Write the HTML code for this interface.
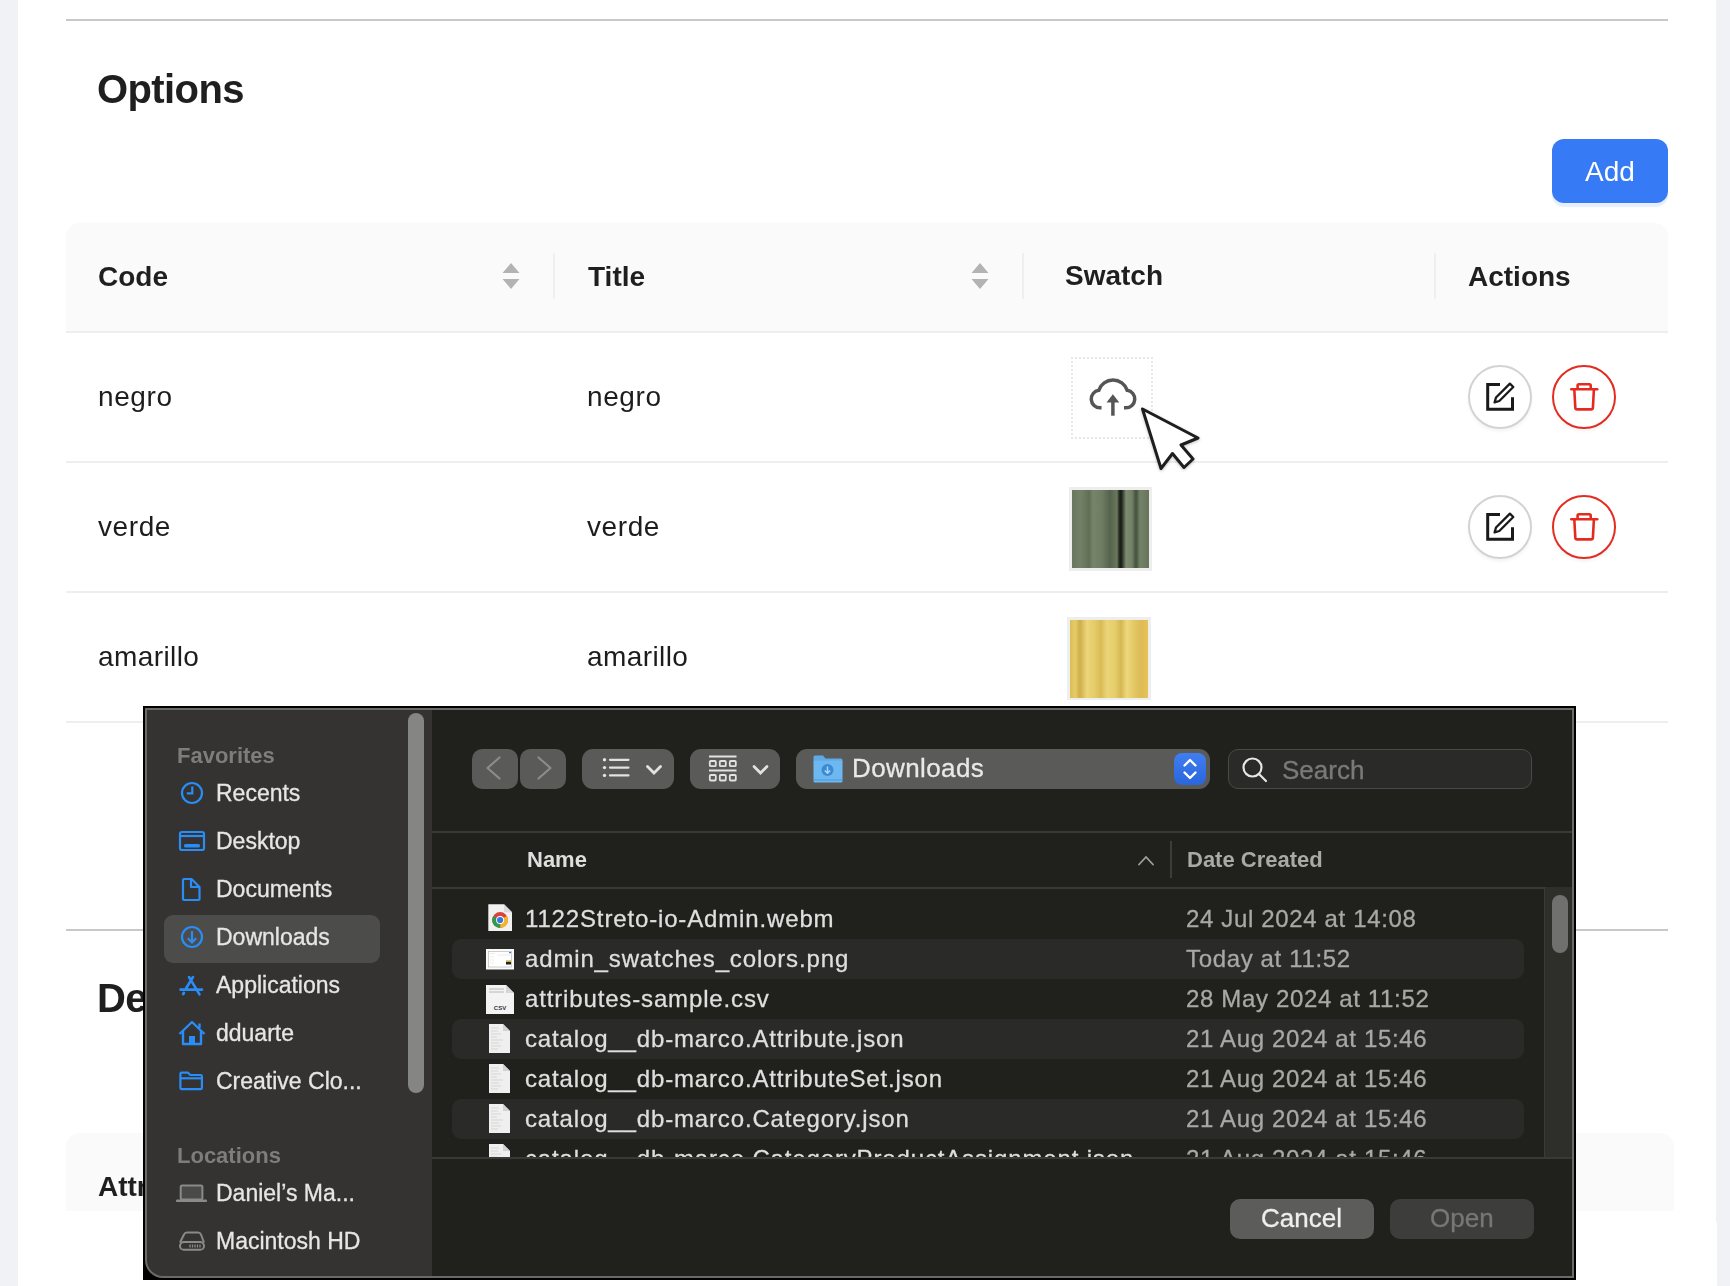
<!DOCTYPE html>
<html><head><meta charset="utf-8">
<style>
*{margin:0;padding:0;box-sizing:border-box}
html,body{width:1730px;height:1286px;overflow:hidden;background:#fff}
body{position:relative;font-family:"Liberation Sans",sans-serif;color:#1d1d1f}
.a{position:absolute}
.t{position:absolute;line-height:1;white-space:nowrap;will-change:transform}
.b{font-weight:bold}
.d{-webkit-text-stroke:0.3px currentColor}
</style></head><body>
<!-- page side strips -->
<div class="a" style="left:0;top:0;width:18px;height:1286px;background:#f0f2f6"></div>
<div class="a" style="left:1716px;top:0;width:14px;height:1222px;background:#f0f2f6"></div><div class="a" style="left:1717px;top:1222px;width:13px;height:64px;background:#f0f2f6"></div>
<!-- top line -->
<div class="a" style="left:66px;top:19px;width:1602px;height:2px;background:#c8c8c8"></div>
<div class="t b" style="left:97px;top:69px;font-size:40px;letter-spacing:-0.6px;color:#1f1f1f">Options</div>
<!-- Add button -->
<div class="a" style="left:1552px;top:139px;width:116px;height:64px;border-radius:12px;background:#367af6;box-shadow:0 4px 1px #e7effc"></div>
<div class="t" style="left:1585px;top:158px;font-size:28px;color:#fff">Add</div>
<!-- table header -->
<div class="a" style="left:66px;top:223px;width:1602px;height:109px;background:#fafafa;border-radius:14px 14px 0 0"></div>
<div class="t b" style="left:98px;top:263px;font-size:28px;color:#1f1f1f">Code</div>
<div class="t b" style="left:588px;top:263px;font-size:28px;color:#1f1f1f">Title</div>
<div class="t b" style="left:1065px;top:262px;font-size:28px;color:#1f1f1f">Swatch</div>
<div class="t b" style="left:1468px;top:263px;font-size:28px;color:#1f1f1f">Actions</div>
<div class="a" style="left:553px;top:253px;width:2px;height:46px;background:#efefef"></div>
<div class="a" style="left:1022px;top:253px;width:2px;height:46px;background:#efefef"></div>
<div class="a" style="left:1434px;top:253px;width:2px;height:46px;background:#efefef"></div>
<svg class="a" style="left:500px;top:261px" width="22" height="30"><path d="M2.5 12 L11 2 L19.5 12 Z M2.5 18 L11 28 L19.5 18 Z" fill="#b3b3b3"/></svg>
<svg class="a" style="left:969px;top:261px" width="22" height="30"><path d="M2.5 12 L11 2 L19.5 12 Z M2.5 18 L11 28 L19.5 18 Z" fill="#b3b3b3"/></svg>
<!-- row lines -->
<div class="a" style="left:66px;top:331px;width:1602px;height:2px;background:#eeeeee"></div>
<div class="a" style="left:66px;top:461px;width:1602px;height:2px;background:#eeeeee"></div>
<div class="a" style="left:66px;top:591px;width:1602px;height:2px;background:#eeeeee"></div>
<div class="a" style="left:66px;top:721px;width:1602px;height:2px;background:#eeeeee"></div>
<!-- rows -->
<div class="t" style="left:98px;top:383px;font-size:28px;letter-spacing:0.6px">negro</div>
<div class="t" style="left:587px;top:383px;font-size:28px;letter-spacing:0.6px">negro</div>
<div class="t" style="left:98px;top:513px;font-size:28px;letter-spacing:0.6px">verde</div>
<div class="t" style="left:587px;top:513px;font-size:28px;letter-spacing:0.6px">verde</div>
<div class="t" style="left:98px;top:643px;font-size:28px;letter-spacing:0.4px">amarillo</div>
<div class="t" style="left:587px;top:643px;font-size:28px;letter-spacing:0.4px">amarillo</div>
<!-- swatches -->
<div class="a" style="left:1071px;top:357px;width:82px;height:82px;border:2px dotted #e6e6e6"></div>
<svg class="a" style="left:1085px;top:372px" width="56" height="48" viewBox="0 0 56 48">
<path d="M16.5 35.75 H15 A8.75 8.75 0 0 1 13.74 18.34 A15 15 0 0 1 42.26 18.34 A8.75 8.75 0 0 1 41 35.75 H39" fill="none" stroke="#555" stroke-width="3.5"/>
<path d="M27.9 43.7 V29" stroke="#555" stroke-width="3.5" fill="none"/>
<path d="M21.5 30.6 L27.9 22.3 L34.3 30.6 Z" fill="#555"/>
</svg>
<div class="a" style="left:1069px;top:487px;width:83px;height:84px;background:#eee"></div>
<div class="a" style="left:1072px;top:490px;width:77px;height:78px;background:linear-gradient(90deg,#687760 0,#728166 9px,#606e55 17px,#768569 21px,#6e7c63 30px,#55634c 38px,#6a785e 45px,#2a3024 47px,#161a13 49px,#3a4433 51px,#7d8b70 54px,#718066 60px,#44503b 64px,#748268 68px,#66745b 77px)"></div>
<div class="a" style="left:1067px;top:617px;width:84px;height:83px;background:#eee"></div>
<div class="a" style="left:1070px;top:620px;width:78px;height:78px;background:linear-gradient(90deg,#d9bd58 0,#e6cc68 5px,#cfae4a 10px,#ecd67a 17px,#e4ca68 25px,#d8bb55 31px,#ebd478 37px,#e6cd6c 45px,#d6b752 51px,#eed87d 57px,#e3c865 64px,#dcbc55 71px,#e8c256 78px)"></div>
<!-- actions -->
<div class="a" style="left:1468px;top:365px;width:64px;height:64px;border-radius:50%;border:2.5px solid #d3d3d3;background:#fff;box-shadow:0 3px 3px rgba(0,0,0,0.04)"></div>
<div class="a" style="left:1552px;top:365px;width:64px;height:64px;border-radius:50%;border:2.5px solid #e32b1f;background:#fff;box-shadow:0 3px 3px rgba(0,0,0,0.04)"></div>
<div class="a" style="left:1468px;top:495px;width:64px;height:64px;border-radius:50%;border:2.5px solid #d3d3d3;background:#fff;box-shadow:0 3px 3px rgba(0,0,0,0.04)"></div>
<div class="a" style="left:1552px;top:495px;width:64px;height:64px;border-radius:50%;border:2.5px solid #e32b1f;background:#fff;box-shadow:0 3px 3px rgba(0,0,0,0.04)"></div>
<svg class="a" style="left:1484px;top:381px" width="32" height="32" viewBox="0 0 32 32">
<path d="M16 3.5 H3.7 V28.2 H28.5 V16.3" fill="none" stroke="#1a1a1a" stroke-width="3"/>
<path d="M25.9 2.6 L29.3 6 L15.3 20 L10.6 21.4 L12 16.5 Z" fill="none" stroke="#1a1a1a" stroke-width="2.3" stroke-linejoin="round"/>
</svg>
<svg class="a" style="left:1484px;top:511px" width="32" height="32" viewBox="0 0 32 32">
<path d="M16 3.5 H3.7 V28.2 H28.5 V16.3" fill="none" stroke="#1a1a1a" stroke-width="3"/>
<path d="M25.9 2.6 L29.3 6 L15.3 20 L10.6 21.4 L12 16.5 Z" fill="none" stroke="#1a1a1a" stroke-width="2.3" stroke-linejoin="round"/>
</svg>
<svg class="a" style="left:1568px;top:381px" width="32" height="32" viewBox="0 0 32 32">
<path d="M3.3 8.2 H29.2" stroke="#e32b1f" stroke-width="2.6" stroke-linecap="round"/>
<path d="M9.6 8 V4.6 Q9.6 3.3 10.9 3.3 H21.4 Q22.7 3.3 22.7 4.6 V8" fill="none" stroke="#e32b1f" stroke-width="2.6"/>
<path d="M6.3 8.2 L7.3 26.6 Q7.4 28.4 9.2 28.4 H23 Q24.8 28.4 24.9 26.6 L25.9 8.2" fill="none" stroke="#e32b1f" stroke-width="2.6" stroke-linejoin="round"/>
</svg>
<svg class="a" style="left:1568px;top:511px" width="32" height="32" viewBox="0 0 32 32">
<path d="M3.3 8.2 H29.2" stroke="#e32b1f" stroke-width="2.6" stroke-linecap="round"/>
<path d="M9.6 8 V4.6 Q9.6 3.3 10.9 3.3 H21.4 Q22.7 3.3 22.7 4.6 V8" fill="none" stroke="#e32b1f" stroke-width="2.6"/>
<path d="M6.3 8.2 L7.3 26.6 Q7.4 28.4 9.2 28.4 H23 Q24.8 28.4 24.9 26.6 L25.9 8.2" fill="none" stroke="#e32b1f" stroke-width="2.6" stroke-linejoin="round"/>
</svg>
<!-- cursor -->
<svg class="a" style="left:1136px;top:402px;filter:drop-shadow(0 1.5px 1.5px rgba(0,0,0,0.25))" width="70" height="74" viewBox="0 0 70 74">
<path d="M6.5 7 L62 36 L45 43 L57 57 L48 65.5 L36.5 51.5 L25 66.5 Z" fill="#fff" stroke="#1e1e1e" stroke-width="3" stroke-linejoin="round"/>
</svg>
<!-- lower page -->
<div class="a" style="left:66px;top:929px;width:1602px;height:2px;background:#c8c8c8"></div>
<div class="t b" style="left:97px;top:977.5px;font-size:40px;letter-spacing:-0.6px;color:#1f1f1f">Default values</div>
<div class="a" style="left:66px;top:1133px;width:1608px;height:78px;background:#fafafa;border-radius:14px 14px 0 0"></div>
<div class="t b" style="left:98px;top:1173px;font-size:28px;color:#1f1f1f">Attribute</div>
<!-- ============ DIALOG ============ -->
<div class="a" style="left:143px;top:706px;width:1433px;height:574px;background:#000"></div>
<div class="a" id="dlg" style="left:145px;top:708px;width:1429px;height:570px;background:#6a6a68;border-radius:0 0 0 18px;overflow:hidden">
 <div class="a" style="left:2px;top:2px;width:285px;height:566px;background:#343332;border-radius:0 0 0 16px"></div>
 <div class="a" style="left:287px;top:2px;width:1140px;height:566px;background:#20201d"></div>
</div>
<!-- sidebar -->
<div class="a" style="left:408px;top:713px;width:16px;height:380px;border-radius:8px;background:#858584"></div>
<div class="a" style="left:164px;top:915px;width:216px;height:48px;border-radius:9px;background:#4c4c4b"></div>
<div class="t b" style="left:176.5px;top:745px;font-size:22px;color:#7d7d7c">Favorites</div>
<div class="t d" style="left:215.5px;top:781.5px;font-size:23px;color:#e6e6e5">Recents</div>
<div class="t d" style="left:215.5px;top:829.5px;font-size:23px;color:#e6e6e5">Desktop</div>
<div class="t d" style="left:215.5px;top:877.5px;font-size:23px;color:#e6e6e5">Documents</div>
<div class="t d" style="left:215.5px;top:925.5px;font-size:23px;color:#e6e6e5">Downloads</div>
<div class="t d" style="left:215.5px;top:973.5px;font-size:23px;color:#e6e6e5">Applications</div>
<div class="t d" style="left:215.5px;top:1021.5px;font-size:23px;color:#e6e6e5">dduarte</div>
<div class="t d" style="left:215.5px;top:1069.5px;font-size:23px;color:#e6e6e5">Creative Clo...</div>
<div class="t b" style="left:176.5px;top:1145px;font-size:22px;color:#7d7d7c">Locations</div>
<div class="t d" style="left:215.5px;top:1181.5px;font-size:23px;color:#e6e6e5">Daniel&#8217;s Ma...</div>
<div class="t d" style="left:215.5px;top:1229.5px;font-size:23px;color:#e6e6e5">Macintosh HD</div>
<!-- sidebar icons -->
<svg class="a" style="left:176px;top:776px" width="34" height="34" viewBox="0 0 34 34" fill="none" stroke="#2a8cf6" stroke-width="2.2">
 <circle cx="16" cy="17" r="10"/><path d="M16.3 10.5 V17.3 H10.8"/>
</svg>
<svg class="a" style="left:176px;top:824px" width="34" height="34" viewBox="0 0 34 34" fill="none" stroke="#2a8cf6" stroke-width="2.2">
 <rect x="4" y="8" width="24" height="18" rx="2"/><path d="M4 12 H28"/><rect x="8" y="20" width="16" height="3.6" rx="1.5" fill="#2a8cf6" stroke="none"/>
</svg>
<svg class="a" style="left:176px;top:872px" width="34" height="34" viewBox="0 0 34 34" fill="none" stroke="#2a8cf6" stroke-width="2.2" stroke-linejoin="round">
 <path d="M7 8 Q7 7 8 7 H15.5 L23.5 15 V27 Q23.5 28 22.5 28 H8 Q7 28 7 27 Z"/><path d="M15 7 V15 H23.5"/>
</svg>
<svg class="a" style="left:176px;top:920px" width="34" height="34" viewBox="0 0 34 34" fill="none" stroke="#2a8cf6" stroke-width="2.2">
 <circle cx="16" cy="17" r="10"/><path d="M16 11 V22.5 M11.8 18.3 L16 22.5 L20.2 18.3"/>
</svg>
<svg class="a" style="left:176px;top:968px" width="34" height="34" viewBox="0 0 34 34" fill="none" stroke="#2a8cf6" stroke-width="2.6" stroke-linecap="round">
 <path d="M13 9 L23.5 26.3 M17 9 L10 20.5 M4.5 21.6 H26"/><path d="M7.2 26 L7.8 25" stroke-width="2.8"/>
</svg>
<svg class="a" style="left:176px;top:1016px" width="34" height="34" viewBox="0 0 34 34" fill="none" stroke="#2a8cf6" stroke-width="2.4" stroke-linejoin="round">
 <path d="M3.5 18 L16 6 L28.5 18"/><path d="M7 15 V28 H25 V15"/><path d="M23.5 12 V7.5"/><rect x="13" y="20" width="6" height="8" fill="#2a8cf6" stroke="none"/>
</svg>
<svg class="a" style="left:176px;top:1064px" width="34" height="34" viewBox="0 0 34 34" fill="none" stroke="#2a8cf6" stroke-width="2.2" stroke-linejoin="round">
 <path d="M4.4 10 Q4.4 8.7 5.7 8.7 H12 L14.3 11 H24.6 Q25.9 11 25.9 12.3 V23.9 Q25.9 25.2 24.6 25.2 H5.7 Q4.4 25.2 4.4 23.9 Z"/><path d="M4.4 14.3 H25.9"/>
</svg>
<svg class="a" style="left:174px;top:1178px" width="38" height="30" viewBox="0 0 38 30">
 <rect x="6.7" y="7.6" width="21.7" height="14" rx="1.5" fill="#4a4a49" stroke="#8a8a89" stroke-width="2"/><rect x="2" y="21.4" width="31" height="2.7" rx="1.2" fill="#8a8a89"/>
</svg>
<svg class="a" style="left:176px;top:1226px" width="34" height="30" viewBox="0 0 34 30" fill="none" stroke="#8a8a89" stroke-width="2">
 <path d="M4 16.5 L8 8.5 Q8.8 6.5 11 6.5 H22 Q24.2 6.5 25 8.5 L28 16.5"/><rect x="4" y="16" width="24" height="7.8" rx="3.9"/><path d="M14 18.5 V21.5 M16.5 18.5 V21.5 M19 18.5 V21.5 M21.5 18.5 V21.5 M24 18.5 V21.5" stroke-width="1.3"/>
</svg>
<!-- toolbar -->
<div class="a" style="left:472px;top:749px;width:46px;height:40px;border-radius:10px;background:#5a5a59"></div>
<div class="a" style="left:520px;top:749px;width:46px;height:40px;border-radius:10px;background:#5a5a59"></div>
<svg class="a" style="left:472px;top:749px" width="94" height="40" viewBox="0 0 94 40" fill="none" stroke="#8c8c8b" stroke-width="2.2" stroke-linecap="round" stroke-linejoin="round">
 <path d="M27.5 8.5 L15.5 19 L27.5 29.5"/><path d="M66.5 8.5 L78.5 19 L66.5 29.5"/>
</svg>
<div class="a" style="left:582px;top:749px;width:92px;height:40px;border-radius:11px;background:#5a5a59"></div>
<svg class="a" style="left:582px;top:749px" width="92" height="40" viewBox="0 0 92 40" fill="none" stroke="#e2e2e1" stroke-width="2.2" stroke-linecap="round">
 <circle cx="22.5" cy="10.8" r="1.7" fill="#e2e2e1" stroke="none"/><circle cx="22.5" cy="18.6" r="1.7" fill="#e2e2e1" stroke="none"/><circle cx="22.5" cy="26.4" r="1.7" fill="#e2e2e1" stroke="none"/>
 <path d="M28 10.8 H46.5 M28 18.6 H46.5 M28 26.4 H46.5"/><path d="M65.5 17.5 L72 24 L78.5 17.5" stroke-width="2.8"/>
</svg>
<div class="a" style="left:690px;top:749px;width:90px;height:40px;border-radius:11px;background:#5a5a59"></div>
<svg class="a" style="left:690px;top:749px" width="90" height="40" viewBox="0 0 90 40" fill="none" stroke="#e2e2e1" stroke-width="1.8">
 <path d="M19 7.5 H46.5 M19 21.5 H46.5"/>
 <rect x="19.8" y="12" width="6" height="5.2" rx="1"/><rect x="29.8" y="12" width="6" height="5.2" rx="1"/><rect x="39.8" y="12" width="6" height="5.2" rx="1"/>
 <rect x="19.8" y="26" width="6" height="5.5" rx="1"/><rect x="29.8" y="26" width="6" height="5.5" rx="1"/><rect x="39.8" y="26" width="6" height="5.5" rx="1"/>
 <path d="M64 17.5 L70.5 24 L77 17.5" stroke-width="2.8" stroke-linecap="round"/>
</svg>
<div class="a" style="left:796px;top:749px;width:414px;height:40px;border-radius:11px;background:#5a5a59"></div>
<div class="a" style="left:1174px;top:753px;width:32px;height:32px;border-radius:8px;background:linear-gradient(#3f7ef0,#2a66dc)"></div>
<svg class="a" style="left:1174px;top:753px" width="32" height="32" viewBox="0 0 32 32" fill="none" stroke="#fff" stroke-width="2.4" stroke-linecap="round" stroke-linejoin="round">
 <path d="M10.5 12.5 L16 7 L21.5 12.5 M10.5 19.5 L16 25 L21.5 19.5"/>
</svg>
<svg class="a" style="left:812px;top:754px" width="32" height="30" viewBox="0 0 32 30">
 <path d="M1.5 3 Q1.5 1.5 3 1.5 H11 L13.5 4.5 H29 Q30.5 4.5 30.5 6 V8 H1.5 Z" fill="#5fa9e6"/>
 <rect x="1.5" y="6.5" width="29" height="22" rx="1.5" fill="#6db8f0"/>
 <path d="M1.5 26 H30.5" stroke="#4d97d6" stroke-width="1"/>
 <circle cx="15.5" cy="16" r="6" fill="#3c8ad4"/>
 <path d="M15.5 12.5 V19 M12.8 16.5 L15.5 19.2 L18.2 16.5" stroke="#a6d6fa" stroke-width="1.5" fill="none"/>
</svg>
<div class="t d" style="left:852px;top:755px;font-size:26px;letter-spacing:0.4px;color:#e9e9e8">Downloads</div>
<div class="a" style="left:1228px;top:749px;width:304px;height:40px;border-radius:10px;background:#2a2a28;border:1.5px solid #494947"></div>
<svg class="a" style="left:1238px;top:752px" width="34" height="34" viewBox="0 0 34 34" fill="none" stroke="#e6e6e5" stroke-width="2.2" stroke-linecap="round">
 <circle cx="14.5" cy="15.5" r="9"/><path d="M21 22 L28 29"/>
</svg>
<div class="t d" style="left:1282px;top:757px;font-size:26px;color:#7a7a78">Search</div>
<!-- column header -->
<div class="a" style="left:432px;top:831px;width:1140px;height:2px;background:#393937"></div>
<div class="t b" style="left:527px;top:848.5px;font-size:22px;color:#dededd">Name</div>
<svg class="a" style="left:1134px;top:850px" width="24" height="20" viewBox="0 0 24 20" fill="none" stroke="#a0a09f" stroke-width="1.8" stroke-linecap="round">
 <path d="M5 14.5 L12 7 L19 14.5"/>
</svg>
<div class="a" style="left:1170px;top:841px;width:1.5px;height:37px;background:#3c3c3a"></div>
<div class="t b" style="left:1187px;top:848.5px;font-size:22px;color:#a9a9a7">Date Created</div>
<div class="a" style="left:432px;top:887px;width:1112px;height:2px;background:#393937"></div>
<!-- scrollbar -->
<div class="a" style="left:1544px;top:887px;width:28px;height:270px;background:#2e2e2a;border-left:1px solid #3a3a36"></div>
<div class="a" style="left:1552px;top:895px;width:16px;height:58px;border-radius:8px;background:#70706e"></div>
<div class="a" style="left:432px;top:1157px;width:1140px;height:2px;background:#393937"></div>
<!-- footer -->
<div class="a" style="left:1230px;top:1199px;width:144px;height:40px;border-radius:10px;background:#5c5c5a"></div>
<div class="t d" style="left:1261px;top:1205px;font-size:26px;color:#efefee">Cancel</div>
<div class="a" style="left:1390px;top:1199px;width:144px;height:40px;border-radius:10px;background:#3d3d3b"></div>
<div class="t d" style="left:1430px;top:1205px;font-size:26px;color:#777775">Open</div>
<!-- files -->
<div class="a" style="left:432px;top:889px;width:1112px;height:268px;overflow:hidden" id="files">
 <div class="a" style="left:20px;top:50px;width:1072px;height:40px;border-radius:9px;background:#2a2a28"></div>
 <div class="a" style="left:20px;top:130px;width:1072px;height:40px;border-radius:9px;background:#2a2a28"></div>
 <div class="a" style="left:20px;top:210px;width:1072px;height:40px;border-radius:9px;background:#2a2a28"></div>
  <div class="t d" style="left:93px;top:17.7px;font-size:24px;letter-spacing:0.85px;color:#dfdfde">1122Streto-io-Admin.webm</div>
 <div class="t d" style="left:754px;top:17.7px;font-size:24px;letter-spacing:0.65px;color:#a8a8a6">24 Jul 2024 at 14:08</div>
 <svg class="a" style="left:56px;top:15px" width="25" height="28" viewBox="0 0 25 28"><path d="M0.3 0.3 H16 L24 8.3 V27 H0.3 Z" fill="#f1f1f1"/><path d="M16 0.3 V8.3 H24 Z" fill="#dadada"/><circle cx="12.1" cy="16" r="7.9" fill="#d9453a"/><path d="M12.1 16 L18.94 12.05 A7.9 7.9 0 0 1 12.1 23.9 Z" fill="#f2b62b"/><path d="M12.1 16 L12.1 23.9 A7.9 7.9 0 0 1 5.26 12.05 Z" fill="#2f9a4b"/><circle cx="12.1" cy="16" r="4" fill="#fff"/><circle cx="12.1" cy="16" r="3.1" fill="#3a78e0"/></svg>
 <div class="t d" style="left:93px;top:57.7px;font-size:24px;letter-spacing:0.85px;color:#dfdfde">admin_swatches_colors.png</div>
 <div class="t d" style="left:754px;top:57.7px;font-size:24px;letter-spacing:0.65px;color:#a8a8a6">Today at 11:52</div>
 <svg class="a" style="left:54px;top:59.5px" width="28" height="22" viewBox="0 0 28 22"><rect x="0" y="0" width="28" height="20.5" fill="#fafafa"/><rect x="2.5" y="2.5" width="23" height="15.5" fill="#fff" stroke="#b0b0b0" stroke-width="0.6"/><path d="M4 4.5 H9 M11 6 H24 M4 8 H8 M4 11 H8 M4 14 H8" stroke="#e0e0e0" stroke-width="0.6"/><rect x="20" y="12.5" width="5" height="3" fill="#222"/><rect x="20" y="11" width="5" height="1.5" fill="#e3d25a"/><rect x="23" y="3" width="2" height="1.2" fill="#3a78e0"/></svg>
 <div class="t d" style="left:93px;top:97.7px;font-size:24px;letter-spacing:0.85px;color:#dfdfde">attributes-sample.csv</div>
 <div class="t d" style="left:754px;top:97.7px;font-size:24px;letter-spacing:0.65px;color:#a8a8a6">28 May 2024 at 11:52</div>
 <svg class="a" style="left:54px;top:96px" width="28" height="30" viewBox="0 0 28 30"><path d="M0 0 H20 L28 8 V29 H0 Z" fill="#f3f3f3"/><path d="M20 0 V8 H28" fill="#d6d6d6"/><path d="M3 4 H18 M3 7 H18" stroke="#b8b8b8" stroke-width="1"/><text x="14" y="25" font-size="6" font-family="Liberation Sans" font-weight="bold" text-anchor="middle" fill="#333">CSV</text></svg>
 <div class="t d" style="left:93px;top:137.7px;font-size:24px;letter-spacing:0.85px;color:#dfdfde">catalog__db-marco.Attribute.json</div>
 <div class="t d" style="left:754px;top:137.7px;font-size:24px;letter-spacing:0.65px;color:#a8a8a6">21 Aug 2024 at 15:46</div>
 <svg class="a" style="left:57px;top:135px" width="22" height="30" viewBox="0 0 22 30"><path d="M0 0 H14 L21 7 V29 H0 Z" fill="#efefef"/><path d="M14 0 V7 H21" fill="#d2d2d2"/><path d="M2 4 H10 M2 7 H9 M2 10 H12 M2 13 H8 M2 16 H14 M2 19 H10 M2 22 H12 M2 25 H9" stroke="#cdcdcd" stroke-width="0.7"/></svg>
 <div class="t d" style="left:93px;top:177.7px;font-size:24px;letter-spacing:0.85px;color:#dfdfde">catalog__db-marco.AttributeSet.json</div>
 <div class="t d" style="left:754px;top:177.7px;font-size:24px;letter-spacing:0.65px;color:#a8a8a6">21 Aug 2024 at 15:46</div>
 <svg class="a" style="left:57px;top:175px" width="22" height="30" viewBox="0 0 22 30"><path d="M0 0 H14 L21 7 V29 H0 Z" fill="#efefef"/><path d="M14 0 V7 H21" fill="#d2d2d2"/><path d="M2 4 H10 M2 7 H9 M2 10 H12 M2 13 H8 M2 16 H14 M2 19 H10 M2 22 H12 M2 25 H9" stroke="#cdcdcd" stroke-width="0.7"/></svg>
 <div class="t d" style="left:93px;top:217.7px;font-size:24px;letter-spacing:0.85px;color:#dfdfde">catalog__db-marco.Category.json</div>
 <div class="t d" style="left:754px;top:217.7px;font-size:24px;letter-spacing:0.65px;color:#a8a8a6">21 Aug 2024 at 15:46</div>
 <svg class="a" style="left:57px;top:215px" width="22" height="30" viewBox="0 0 22 30"><path d="M0 0 H14 L21 7 V29 H0 Z" fill="#efefef"/><path d="M14 0 V7 H21" fill="#d2d2d2"/><path d="M2 4 H10 M2 7 H9 M2 10 H12 M2 13 H8 M2 16 H14 M2 19 H10 M2 22 H12 M2 25 H9" stroke="#cdcdcd" stroke-width="0.7"/></svg>
 <div class="t d" style="left:93px;top:257.7px;font-size:24px;letter-spacing:0.85px;color:#dfdfde">catalog__db-marco.CategoryProductAssignment.json</div>
 <div class="t d" style="left:754px;top:257.7px;font-size:24px;letter-spacing:0.65px;color:#a8a8a6">21 Aug 2024 at 15:46</div>
 <svg class="a" style="left:57px;top:255px" width="22" height="30" viewBox="0 0 22 30"><path d="M0 0 H14 L21 7 V29 H0 Z" fill="#efefef"/><path d="M14 0 V7 H21" fill="#d2d2d2"/><path d="M2 4 H10 M2 7 H9 M2 10 H12 M2 13 H8 M2 16 H14 M2 19 H10 M2 22 H12 M2 25 H9" stroke="#cdcdcd" stroke-width="0.7"/></svg>
</div>
</body></html>
